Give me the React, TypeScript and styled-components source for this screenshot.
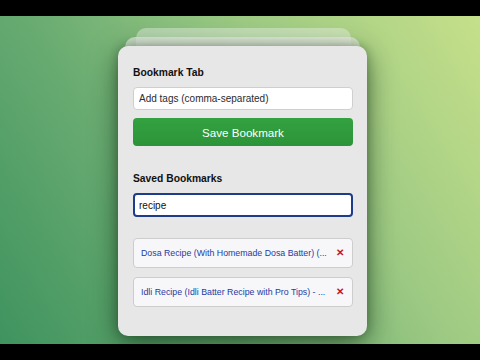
import React from "react";
import styled, { createGlobalStyle } from "styled-components";

const Global = createGlobalStyle`
  html, body { margin: 0; padding: 0; background: #000; }
  body { width: 480px; height: 360px; overflow: hidden; font-family: "Liberation Sans", Arial, sans-serif; }
  * { box-sizing: border-box; }
`;

const Frame = styled.div`
  width: 480px;
  height: 360px;
  padding: 16px 0;
  background: #000;
`;

const Stage = styled.div`
  height: 328px;
  display: flex;
  justify-content: center;
  align-items: flex-start;
  padding: 30px 0 0 5px;
  overflow: hidden;
  background: linear-gradient(58deg, #3f935f 0%, #6aac72 35%, #9cc983 65%, #c6e08a 100%);
`;

const Stack = styled.div`
  position: relative;
  width: 249px;
  &::before, &::after {
    content: "";
    position: absolute;
    border-radius: 10px;
  }
  &::before {
    left: 18px;
    right: 16px;
    top: -18px;
    height: 60px;
    background: rgba(236, 242, 232, 0.45);
  }
  &::after {
    left: 7px;
    right: 7px;
    top: -9px;
    height: 60px;
    background: rgba(236, 240, 232, 0.7);
  }
`;

const Card = styled.div`
  position: relative;
  z-index: 1;
  width: 249px;
  height: 290px;
  background: #e7e7e7;
  border-radius: 10px;
  padding: 21px 14px 0 15px;
  box-shadow: 0 8px 28px rgba(10, 40, 15, 0.6), 0 0 10px rgba(10, 40, 15, 0.3);
  display: flex;
  flex-direction: column;
`;

const Heading = styled.h3<{ $gap?: number }>`
  margin: ${(p) => p.$gap ?? 0}px 0 8px;
  font-size: 10.3px;
  line-height: 12px;
  font-weight: 700;
  color: #111;
`;

const TextField = styled.input<{ $active?: boolean }>`
  display: block;
  width: 100%;
  height: ${(p) => (p.$active ? 24 : 23)}px;
  margin: 0;
  padding: 0 0 0 ${(p) => (p.$active ? 4 : 5)}px;
  font-family: "Liberation Sans", Arial, sans-serif;
  font-size: 10px;
  color: #111;
  background: #fff;
  border: ${(p) => (p.$active ? "2px solid #1d3c8c" : "1px solid #cfcfcf")};
  border-radius: 4px;
  outline: none;
  &::placeholder { color: #2b2b2b; opacity: 1; }
`;

const SaveButton = styled.button`
  display: block;
  width: 100%;
  height: 28px;
  margin-top: 8px;
  border: none;
  border-radius: 4px;
  background: linear-gradient(#33a240, #2c9438);
  color: #fff;
  font-family: "Liberation Sans", Arial, sans-serif;
  font-size: 11.6px;
  cursor: pointer;
`;

const List = styled.ul`
  list-style: none;
  margin: 21px 0 0;
  padding: 0;
  display: flex;
  flex-direction: column;
  gap: 9px;
`;

const Item = styled.li`
  height: 30px;
  display: flex;
  align-items: center;
  gap: 8px;
  padding: 0 8px 0 7px;
  background: #f7f7f9;
  border: 1px solid #cdcdcd;
  border-radius: 4px;
`;

const ItemLink = styled.a`
  flex: 1;
  min-width: 0;
  white-space: nowrap;
  font-size: 8.8px;
  color: #1f3aa3;
  text-decoration: none;
`;

const Remove = styled.span`
  color: #c4161c;
  font-size: 10px;
  font-weight: 700;
  line-height: 1;
`;

const bookmarks = [
  "Dosa Recipe (With Homemade Dosa Batter) (...",
  "Idli Recipe (Idli Batter Recipe with Pro Tips) - ...",
];

export default function App() {
  return (
    <>
      <Global />
      <Frame>
        <Stage>
          <Stack>
            <Card>
              <Heading>Bookmark Tab</Heading>
              <TextField placeholder="Add tags (comma-separated)" />
              <SaveButton>Save Bookmark</SaveButton>
              <Heading $gap={27}>Saved Bookmarks</Heading>
              <TextField $active defaultValue="recipe" />
              <List>
                {bookmarks.map((b) => (
                  <Item key={b}>
                    <ItemLink href="#">{b}</ItemLink>
                    <Remove>✕</Remove>
                  </Item>
                ))}
              </List>
            </Card>
          </Stack>
        </Stage>
      </Frame>
    </>
  );
}
